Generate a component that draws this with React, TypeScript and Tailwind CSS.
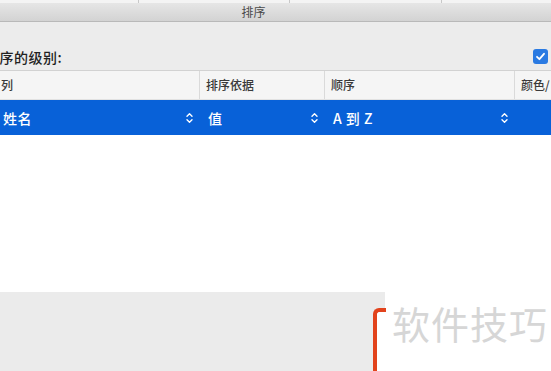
import React from 'react';

const font = { fontFamily: '"Noto Sans CJK SC", "Liberation Sans", sans-serif' };

const UpDown = () => (
  <svg width="7" height="12" viewBox="0 0 7 12" fill="none" stroke="white" strokeWidth="1.4" strokeLinecap="round" strokeLinejoin="round">
    <path d="M1 4.2 L3.5 1.7 L6 4.2" />
    <path d="M1 7.8 L3.5 10.3 L6 7.8" />
  </svg>
);

const cols = [
  { w: 'w-[200px]', head: '列', value: '姓名', pad: 'pl-[3px]', headPad: 'pl-[1px]' },
  { w: 'w-[125px]', head: '排序依据', value: '值', pad: 'pl-[8px]', headPad: 'pl-[6px]' },
  { w: 'w-[190px]', head: '顺序', value: 'A 到 Z', pad: 'pl-[8px]', headPad: 'pl-[6px]' },
  { w: 'w-[36px]', head: '颜色/', value: '', pad: 'pl-[8px]', headPad: 'pl-[6px]' },
];

export default function App() {
  return (
    <div className="relative w-[551px] h-[371px] overflow-hidden bg-white flex flex-col" style={font}>
      {/* window top strip */}
      <div className="h-[3px] bg-[#f4f4f4] flex">
        <div className="w-[139px] border-r border-[#c8c8c8]" />
        <div className="w-[151px] border-r border-[#c8c8c8]" />
        <div className="w-[152px] border-r border-[#c8c8c8]" />
      </div>

      {/* title bar */}
      <div className="h-[19px] bg-gradient-to-b from-[#e6e6e6] to-[#d3d3d3] border-b border-[#b9b9b9] flex items-center justify-center">
        <span className="text-[12px] leading-none text-[#4a4a4a] ml-[-44px]">排序</span>
      </div>

      {/* options panel */}
      <div className="h-[49px] bg-[#ececec] flex items-end justify-between pb-[6px] border-b border-[#d2d2d2]">
        <span className="ml-[-15px] text-[14px] leading-none font-medium text-[#222] tracking-[0.5px]">排序的级别:</span>
        <div className="mr-[3px] w-[15px] h-[15px] rounded-[3px] bg-[#2a7ae2] flex items-center justify-center">
          <svg width="11" height="11" viewBox="0 0 11 11" fill="none" stroke="white" strokeWidth="1.8" strokeLinecap="round" strokeLinejoin="round">
            <path d="M2 5.8 L4.4 8.2 L9 2.8" />
          </svg>
        </div>
      </div>

      {/* header */}
      <div className="h-[29px] bg-[#f5f5f5] flex border-b border-[#e2e2e2]">
        {cols.map((c, i) => (
          <div
            key={c.head}
            className={`${c.w} ${c.headPad} shrink-0 flex items-center text-[12px] leading-none font-medium text-[#3a3a3a] ${i < 3 ? 'border-r border-[#dadada]' : ''}`}
          >
            {c.head}
          </div>
        ))}
      </div>

      {/* selected row */}
      <div className="h-[35px] bg-[#0861d8] flex">
        {cols.map(c => (
          <div key={c.head} className={`${c.w} ${c.pad} shrink-0 flex items-center justify-between pr-[7px] text-white`}>
            <span className="text-[14px] leading-none font-medium tracking-[0.5px]">{c.value}</span>
            {c.value !== '' ? <UpDown /> : null}
          </div>
        ))}
      </div>

      <div className="h-[157px] bg-white" />

      {/* bottom strip */}
      <div className="flex-1 flex">
        <div className="w-[385px] bg-[#ebebeb]" />
        <div className="flex-1 bg-white pl-[7px] pt-[12px]">
          <span className="text-[38px] leading-none text-[#d6d6d6] tracking-[1px]">软件技巧</span>
        </div>
      </div>

      {/* red bracket */}
      <div className="absolute left-[373px] top-[308px] w-[13px] h-[80px] bg-white border-l-4 border-t-4 border-[#e2431c] rounded-tl-[6px]" />
    </div>
  );
}
